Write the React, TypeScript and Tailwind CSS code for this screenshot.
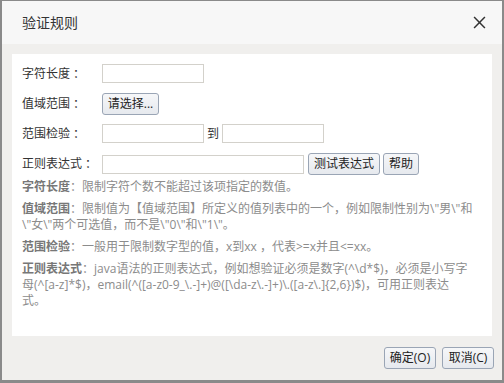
import React from 'react';

const font = { fontFamily: '"Open Sans", "Noto Sans CJK SC", sans-serif' };

const TextBox: React.FC<{ w: string }> = ({ w }) => (
  <input type="text" className={`${w} h-[19px] border border-[#d3d1cb] bg-white px-1 outline-none`} />
);

const Btn: React.FC<{ children: React.ReactNode; w: string }> = ({ children, w }) => (
  <button className={`${w} h-[22px] rounded-[3px] border border-[#9aa5b5] bg-gradient-to-b from-[#f6f7f9] to-[#e6e9ee] text-[12px] text-[#222] leading-none`}>
    {children}
  </button>
);

const App: React.FC = () => {
  return (
    <div className="w-[504px] h-[383px] bg-[#8a8a8a] pl-[2px] pt-[1px] overflow-hidden" style={font}>
      <div className="w-[500px] h-[379px] flex flex-col bg-[#f0efed]">
        {/* Title */}
        <div className="h-[43px] flex items-center justify-between bg-[#f7f7f7] pl-[20px] pr-[16px]">
          <span className="text-[14px] text-[#333]">验证规则</span>
          <svg className="w-[13px] h-[13px]" viewBox="0 0 12 12" fill="none" stroke="#333" strokeWidth={1.4}>
            <path d="M1 1l10 10M11 1L1 11" />
          </svg>
        </div>

        {/* Body */}
        <div className="mx-[10px] mt-[10px] h-[282px] bg-white px-[10px] pt-[10px] text-[12px] text-[#333]">
          <div className="flex flex-col gap-[10px]">
            <div className="flex items-center h-[19px]">
              <span className="w-[80px]">字符长度 ：</span>
              <TextBox w="w-[102px]" />
            </div>
            <div className="flex items-center h-[21px]">
              <span className="w-[80px]">值域范围 ：</span>
              <Btn w="w-[57px]">请选择...</Btn>
            </div>
            <div className="flex items-center h-[19px]">
              <span className="w-[80px]">范围检验 ：</span>
              <TextBox w="w-[102px]" />
              <span className="mx-[3px]">到</span>
              <TextBox w="w-[102px]" />
            </div>
            <div className="flex items-center h-[22px]">
              <span className="w-[80px]">正则表达式 ：</span>
              <TextBox w="w-[202px]" />
              <span className="ml-[4px]"><Btn w="w-[72px]">测试表达式</Btn></span>
              <span className="ml-[3px]"><Btn w="w-[36px]">帮助</Btn></span>
            </div>
          </div>

          <div className="mt-[4px] flex flex-col gap-[6px] text-[12px] leading-[16px] text-[#8c8c8c] whitespace-nowrap">
            <p><b className="text-[#777]">字符长度</b>：限制字符个数不能超过该项指定的数值。</p>
            <p>
              <b className="text-[#777]">值域范围</b>：限制值为【值域范围】所定义的值列表中的一个，例如限制性别为\"男\"和<br />
              \"女\"两个可选值，而不是\"0\"和\"1\"。
            </p>
            <p><b className="text-[#777]">范围检验</b>：一般用于限制数字型的值，x到xx ，代表&gt;=x并且&lt;=xx。</p>
            <p>
              <b className="text-[#777]">正则表达式</b>：java语法的正则表达式，例如想验证必须是数字(^\d*$)，必须是小写字<br />
              母(^[a-z]*$)，email(^([a-z0-9_\.-]+)@([\da-z\.-]+)\.([a-z\.]{'{2,6}'})$)，可用正则表达<br />
              式。
            </p>
          </div>
        </div>

        {/* Footer */}
        <div className="flex justify-end gap-[6px] pr-[8px] mt-[11px]">
          <Btn w="w-[52px]">确定(O)</Btn>
          <Btn w="w-[52px]">取消(C)</Btn>
        </div>
      </div>
    </div>
  );
};

export default App;
